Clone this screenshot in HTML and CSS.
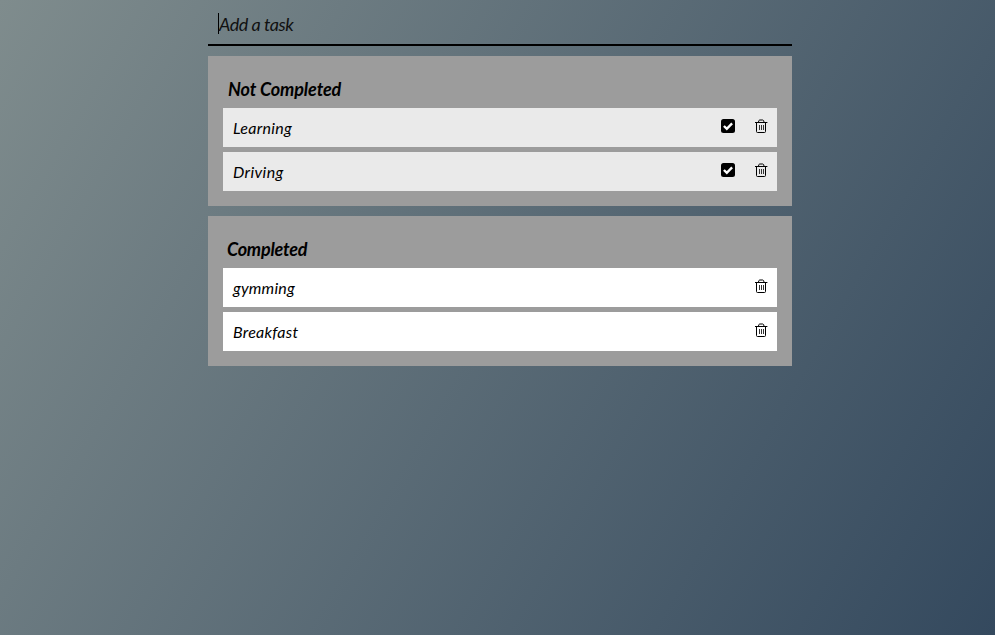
FILE: index.html
```html
<!DOCTYPE html>
<html lang="en">
<head>
<meta charset="utf-8">
<title>To-do list</title>
<link rel="stylesheet" href="styles.css">
</head>
<body>
<svg class="sprite" aria-hidden="true">
  <symbol id="check" viewBox="0 0 14 14"><rect x="0" y="0" width="14" height="14" rx="2.5"/><path d="M2.9 7l2.9 2.8 5.3-5.4" fill="none" stroke="#fff" stroke-width="2.4"/></symbol>
  <symbol id="trash" viewBox="0 0 14 14"><path d="M1 3.5h12.4M4.5 3Q4.7 1 5.7 1h3Q9.8 1 10 3M2.5 3.5v9q0 1 1 1h7q1 0 1-1v-9" fill="none" stroke="#000" stroke-width="1"/><path d="M5.5 6v5M7.5 6v5M9.5 6v5" stroke="#333" stroke-width="1"/></symbol>
</svg>
<main class="app">
  <div class="entry"><span class="caret"></span><span class="add">Add a task</span></div>
  <section class="panel">
    <h2 class="title pending-title">Not Completed</h2>
    <ul class="list pending">
      <li class="task"><span class="name learning">Learning</span><svg class="icon"><use href="#check"/></svg><svg class="icon"><use href="#trash"/></svg></li>
      <li class="task"><span class="name driving">Driving</span><svg class="icon"><use href="#check"/></svg><svg class="icon"><use href="#trash"/></svg></li>
    </ul>
  </section>
  <section class="panel">
    <h2 class="title done-title">Completed</h2>
    <ul class="list done">
      <li class="task"><span class="name gymming">gymming</span><svg class="icon"><use href="#trash"/></svg></li>
      <li class="task"><span class="name breakfast">Breakfast</span><svg class="icon"><use href="#trash"/></svg></li>
    </ul>
  </section>
</main>
</body>
</html>
```
FILE: styles.css
```css
* { box-sizing: border-box; }
body {
  margin: 0;
  min-height: 100vh;
  background: linear-gradient(120deg, #7f8c8d, #34495e);
  font-family: Lato, sans-serif;
  font-style: italic;
  color: #000;
}
.sprite { display: none; }
.app { width: 584px; margin: 0 auto 0 208px; display: flex; flex-direction: column; gap: 10px; }
.entry {
  height: 46px;
  padding: 3px 10px 0;
  border-bottom: 2px solid #000;
  display: flex;
  align-items: center;
  font-size: 18px;
}
.caret { width: 1px; height: 21px; background: #000; }
.add { letter-spacing: -0.45px; color: #111; }
.panel { height: 150px; padding: 20px 15px 15px; background: #9c9c9c; }
.title { margin: 0; padding-left: 5px; height: 32px; line-height: 26px; font-size: 18px; font-weight: 700; white-space: nowrap; }
.pending-title { letter-spacing: -0.1px; }
.done-title { padding-left: 4px; letter-spacing: -0.2px; }
.list { margin: 0; padding: 0; list-style: none; display: flex; flex-direction: column; gap: 5px; }
.task { height: 39px; padding: 0 9px 0 10px; display: flex; align-items: center; gap: 19px; background: #fff; font-size: 16px; }
.pending .task { background: #eaeaea; }
.name { flex: 1; }
.learning { letter-spacing: 0.3px; }
.driving { letter-spacing: 0.4px; }
.gymming { letter-spacing: 0.2px; }
.breakfast { letter-spacing: 0.25px; }
.icon { width: 14px; height: 14px; margin-bottom: 3px; }
```
